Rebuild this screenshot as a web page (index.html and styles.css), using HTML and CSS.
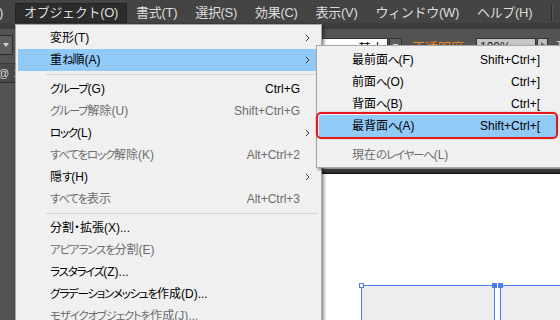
FILE: index.html
```html
<!DOCTYPE html>
<html lang="ja">
<head>
<meta charset="utf-8">
<title>オブジェクト メニュー</title>
<link rel="stylesheet" href="styles.css">
</head>
<body>
<div class="app">
  <nav class="menubar">
    <span class="mb-item cut">)</span>
    <span class="mb-item active">オブジェクト(O)</span>
    <span class="mb-item">書式(T)</span>
    <span class="mb-item">選択(S)</span>
    <span class="mb-item">効果(C)</span>
    <span class="mb-item">表示(V)</span>
    <span class="mb-item">ウィンドウ(W)</span>
    <span class="mb-item">ヘルプ(H)</span>
    <span class="mb-sep"></span>
  </nav>

  <div class="controlbar">
    <div class="dd-btn"><span class="tri-down"></span></div>
    <div class="ctl-right">
      <div class="style-field"><span class="stroke-line"></span><span class="style-name">基本</span></div>
      <div class="mini-btn"><span class="minus"></span></div>
      <span class="opacity-label">不透明度：</span>
      <div class="pct-field">100%</div>
      <div class="arrow-btn"><span class="tri-right"></span></div>
      <span class="more">T</span>
    </div>
  </div>

  <div class="workspace">
    <aside class="tools">
      <div class="tools-head"><span>@</span><span class="num">1</span></div>
    </aside>
    <section class="document">
      <div class="doc-tabs"></div>
      <div class="doc-edge"></div>
      <div class="canvas">
        <svg class="artwork" width="545" height="146" viewBox="0 0 545 146">
          <rect x="346.5" y="111.5" width="133" height="60" fill="#ededed" stroke="#4b7cf0" stroke-width="1"/>
          <rect x="485.5" y="111.5" width="100" height="60" fill="#ededed" stroke="#4b7cf0" stroke-width="1"/>
          <rect x="344.5" y="109.5" width="4" height="4" fill="#ffffff" stroke="#4b7cf0" stroke-width="1"/>
          <rect x="477" y="109" width="5" height="5" fill="#4b7cf0"/>
          <rect x="483" y="109" width="5" height="5" fill="#4b7cf0"/>
        </svg>
      </div>
    </section>
  </div>

  <div class="menu main-menu">
    <div class="mi"><span class="lbl">変形(T)</span><span class="sc"></span><span class="arr"><svg width="5" height="8" viewBox="0 0 5 8"><path d="M0.8 0.8 L4 4 L0.8 7.2" fill="none" stroke="#3a3a3a" stroke-width="1"/></svg></span></div>
    <div class="mi hl"><span class="lbl">重<span class="k">ね</span>順(A)</span><span class="sc"></span><span class="arr"><svg width="5" height="8" viewBox="0 0 5 8"><path d="M0.8 0.8 L4 4 L0.8 7.2" fill="none" stroke="#3a3a3a" stroke-width="1"/></svg></span></div>
    <div class="msep"></div>
    <div class="mi"><span class="lbl"><span class="k">グループ</span>(G)</span><span class="sc">Ctrl+G</span><span class="arr"></span></div>
    <div class="mi dis"><span class="lbl"><span class="k">グループ</span>解除(U)</span><span class="sc">Shift+Ctrl+G</span><span class="arr"></span></div>
    <div class="mi"><span class="lbl"><span class="k">ロック</span>(L)</span><span class="sc"></span><span class="arr"><svg width="5" height="8" viewBox="0 0 5 8"><path d="M0.8 0.8 L4 4 L0.8 7.2" fill="none" stroke="#3a3a3a" stroke-width="1"/></svg></span></div>
    <div class="mi dis"><span class="lbl"><span class="k">すべてをロック</span>解除(K)</span><span class="sc">Alt+Ctrl+2</span><span class="arr"></span></div>
    <div class="mi"><span class="lbl">隠<span class="k">す</span>(H)</span><span class="sc"></span><span class="arr"><svg width="5" height="8" viewBox="0 0 5 8"><path d="M0.8 0.8 L4 4 L0.8 7.2" fill="none" stroke="#3a3a3a" stroke-width="1"/></svg></span></div>
    <div class="mi dis"><span class="lbl"><span class="k">すべてを</span>表示</span><span class="sc">Alt+Ctrl+3</span><span class="arr"></span></div>
    <div class="msep"></div>
    <div class="mi"><span class="lbl">分割・拡張(X)...</span><span class="sc"></span><span class="arr"></span></div>
    <div class="mi dis"><span class="lbl"><span class="k">アピアランスを</span>分割(E)</span><span class="sc"></span><span class="arr"></span></div>
    <div class="mi"><span class="lbl"><span class="k">ラスタライズ</span>(Z)...</span><span class="sc"></span><span class="arr"></span></div>
    <div class="mi"><span class="lbl"><span class="k">グラデーションメッシュを</span>作成(D)...</span><span class="sc"></span><span class="arr"></span></div>
    <div class="mi dis"><span class="lbl"><span class="k">モザイクオブジェクトを</span>作成(J)...</span><span class="sc"></span><span class="arr"></span></div>
  </div>

  <div class="menu sub-menu">
    <div class="mi"><span class="lbl">最前面<span class="k">へ</span>(F)</span><span class="sc">Shift+Ctrl+]</span></div>
    <div class="mi"><span class="lbl">前面<span class="k">へ</span>(O)</span><span class="sc">Ctrl+]</span></div>
    <div class="mi"><span class="lbl">背面<span class="k">へ</span>(B)</span><span class="sc">Ctrl+[</span></div>
    <div class="mi hl target"><span class="lbl">最背面<span class="k">へ</span>(A)</span><span class="sc">Shift+Ctrl+[</span></div>
    <div class="gap"></div>
    <div class="mi dis"><span class="lbl">現在<span class="k">のレイヤーへ</span>(L)</span><span class="sc"></span></div>
  </div>
</div>
</body>
</html>
```

FILE: styles.css
```css
* { box-sizing: border-box; margin: 0; padding: 0; }

html, body {
  width: 560px;
  height: 320px;
  overflow: hidden;
}

body {
  background: #535353;
  font-family: "Liberation Sans", "Noto Sans CJK JP", sans-serif;
}

.app {
  position: relative;
  width: 560px;
  height: 320px;
  display: flex;
  flex-direction: column;
  overflow: hidden;
}

/* ---------- menu bar ---------- */
.menubar {
  flex: 0 0 23px;
  height: 23px;
  background: #444444;
  display: flex;
  align-items: flex-end;
  font-size: 13px;
  color: #dcdcdc;
}

.mb-item {
  height: 20px;
  line-height: 18px;
  padding: 0 8px 0 8px;
  border: 1px solid transparent;
  white-space: nowrap;
  letter-spacing: -0.3px;
}

.mb-item.cut {
  width: 15px;
  padding: 0;
  border: none;
  line-height: 20px;
  text-indent: -1px;
}

.mb-item.active {
  background: #2c2c2c;
  border-color: #242424;
}

.mb-sep {
  align-self: center;
  margin: 2px 0 0 10px;
  width: 1px;
  height: 16px;
  background: #2a2a2a;
  box-shadow: 1px 0 0 #555555;
}

/* ---------- control bar ---------- */
.controlbar {
  flex: 0 0 40px;
  height: 40px;
  background: #535353;
  border-top: 6px solid #3c3c3c;
  display: flex;
  align-items: flex-start;
}

.dd-btn {
  width: 13px;
  height: 20px;
  margin-top: 6px;
  background: #5d5d5d;
  border: 1px solid #2b2b2b;
  border-left: none;
  display: flex;
  align-items: center;
  justify-content: center;
}

.tri-down {
  width: 0;
  height: 0;
  border-left: 3.5px solid transparent;
  border-right: 3.5px solid transparent;
  border-top: 4px solid #d4d4d4;
  margin-left: -1px;
}

.ctl-right {
  margin-left: auto;
  margin-top: 9px;
  display: flex;
  align-items: flex-start;
}

.style-field {
  width: 138px;
  height: 18px;
  background: #ffffff;
  border: 1px solid #333333;
  display: flex;
  align-items: flex-start;
}

.stroke-line {
  width: 30px;
  height: 1px;
  margin: 6px 0 0 72px;
  background: #000000;
}

.style-name {
  margin-left: 5px;
  font-size: 13px;
  line-height: 16px;
  color: #000;
  margin-top: 2px;
}

.mini-btn {
  width: 13px;
  height: 18px;
  margin-left: 1px;
  background: #5f5f5f;
  border: 1px solid #333333;
  display: flex;
  justify-content: center;
}

.minus {
  width: 5px;
  height: 1px;
  margin-top: 5px;
  background: #dddddd;
}

.opacity-label {
  width: 58px;
  margin-left: 10px;
  font-size: 13px;
  line-height: 18px;
  color: #f28a1f;
  white-space: nowrap;
  overflow: hidden;
  margin-top: 1px;
}

.pct-field {
  width: 60px;
  height: 18px;
  margin-left: 6px;
  background: #c6c6c6;
  border: 1px solid #333333;
  font-size: 12px;
  line-height: 16px;
  padding-left: 3px;
  color: #1c1c1c;
}

.arrow-btn {
  width: 11px;
  height: 18px;
  margin-left: 1px;
  background: #bdbdbd;
  border: 1px solid #333333;
  display: flex;
  justify-content: center;
  padding-top: 3px;
}

.tri-right {
  width: 0;
  height: 0;
  border-top: 3px solid transparent;
  border-bottom: 3px solid transparent;
  border-left: 4px solid #666666;
}

.more {
  width: 4px;
  margin-left: 8px;
  font-size: 11px;
  line-height: 14px;
  color: #cfcfcf;
  overflow: hidden;
}

/* ---------- workspace ---------- */
.workspace {
  flex: 1;
  display: flex;
  min-height: 0;
}

.tools {
  flex: 0 0 15px;
  width: 15px;
  background: #535353;
}

.tools-head {
  height: 20px;
  background: #484848;
  border-top: 1px solid #3a3a3a;
  border-bottom: 1px solid #2e2e2e;
  display: flex;
  align-items: center;
  font-size: 11px;
  color: #dddddd;
  white-space: nowrap;
}

.tools-head span:first-child { margin-left: -2px; }
.tools-head .num { margin-left: 4px; }

.document {
  flex: 1;
  display: flex;
  flex-direction: column;
}

.doc-tabs {
  flex: 0 0 106px;
  background: #e6e6e6;
}

.doc-edge {
  flex: 0 0 5px;
  background: linear-gradient(#5a5a5a, #111111);
}

.canvas {
  flex: 1;
  position: relative;
  background: #ffffff;
}

.artwork {
  position: absolute;
  left: 0;
  top: 0;
  display: block;
}

/* ---------- dropdown menus ---------- */
.menu {
  position: absolute;
  background: #f0f0f0;
  border: 1px solid #a6a6a6;
  font-size: 12px;
  color: #000000;
  font-feature-settings: "palt" 1;
  box-shadow: 2px 2px 3px rgba(0, 0, 0, 0.45);
}

/* narrow kana, like the UI font of the original */
.k {
  font-size: 11.5px;
  letter-spacing: -1.2px;
}

.main-menu {
  left: 15px;
  top: 24px;
  width: 307px;
  height: 320px;
  padding-top: 2px;
}

.mi {
  height: 22px;
  line-height: 22px;
  display: grid;
  grid-template-columns: 1fr auto 20px;
  align-items: center;
  margin: 0 1px 0 2px;
  padding-left: 32px;
  white-space: nowrap;
}

.mi.hl { background: #91c9f7; }
.mi.dis { color: #6d6d6d; }

.arr {
  display: flex;
  align-items: center;
  padding-left: 5px;
}

.arr svg { display: block; }

.msep {
  height: 1px;
  margin: 3px 3px 3px 30px;
  background: #d6d6d6;
}

.sub-menu {
  left: 316px;
  top: 45px;
  width: 250px;
  padding: 3px 0 1px;
}

.sub-menu .mi {
  grid-template-columns: 1fr auto;
  margin: 0 9px 0 2px;
  padding: 0 16px 0 33px;
}

.sub-menu .gap { height: 7px; }

.mi.target { position: relative; }

.mi.target::after {
  content: "";
  position: absolute;
  top: -3px;
  left: -3px;
  right: -2px;
  bottom: -2px;
  border: 2px solid #e5171d;
  border-radius: 5px;
  box-shadow: 0 0 2px rgba(0, 0, 0, 0.25);
}
```
